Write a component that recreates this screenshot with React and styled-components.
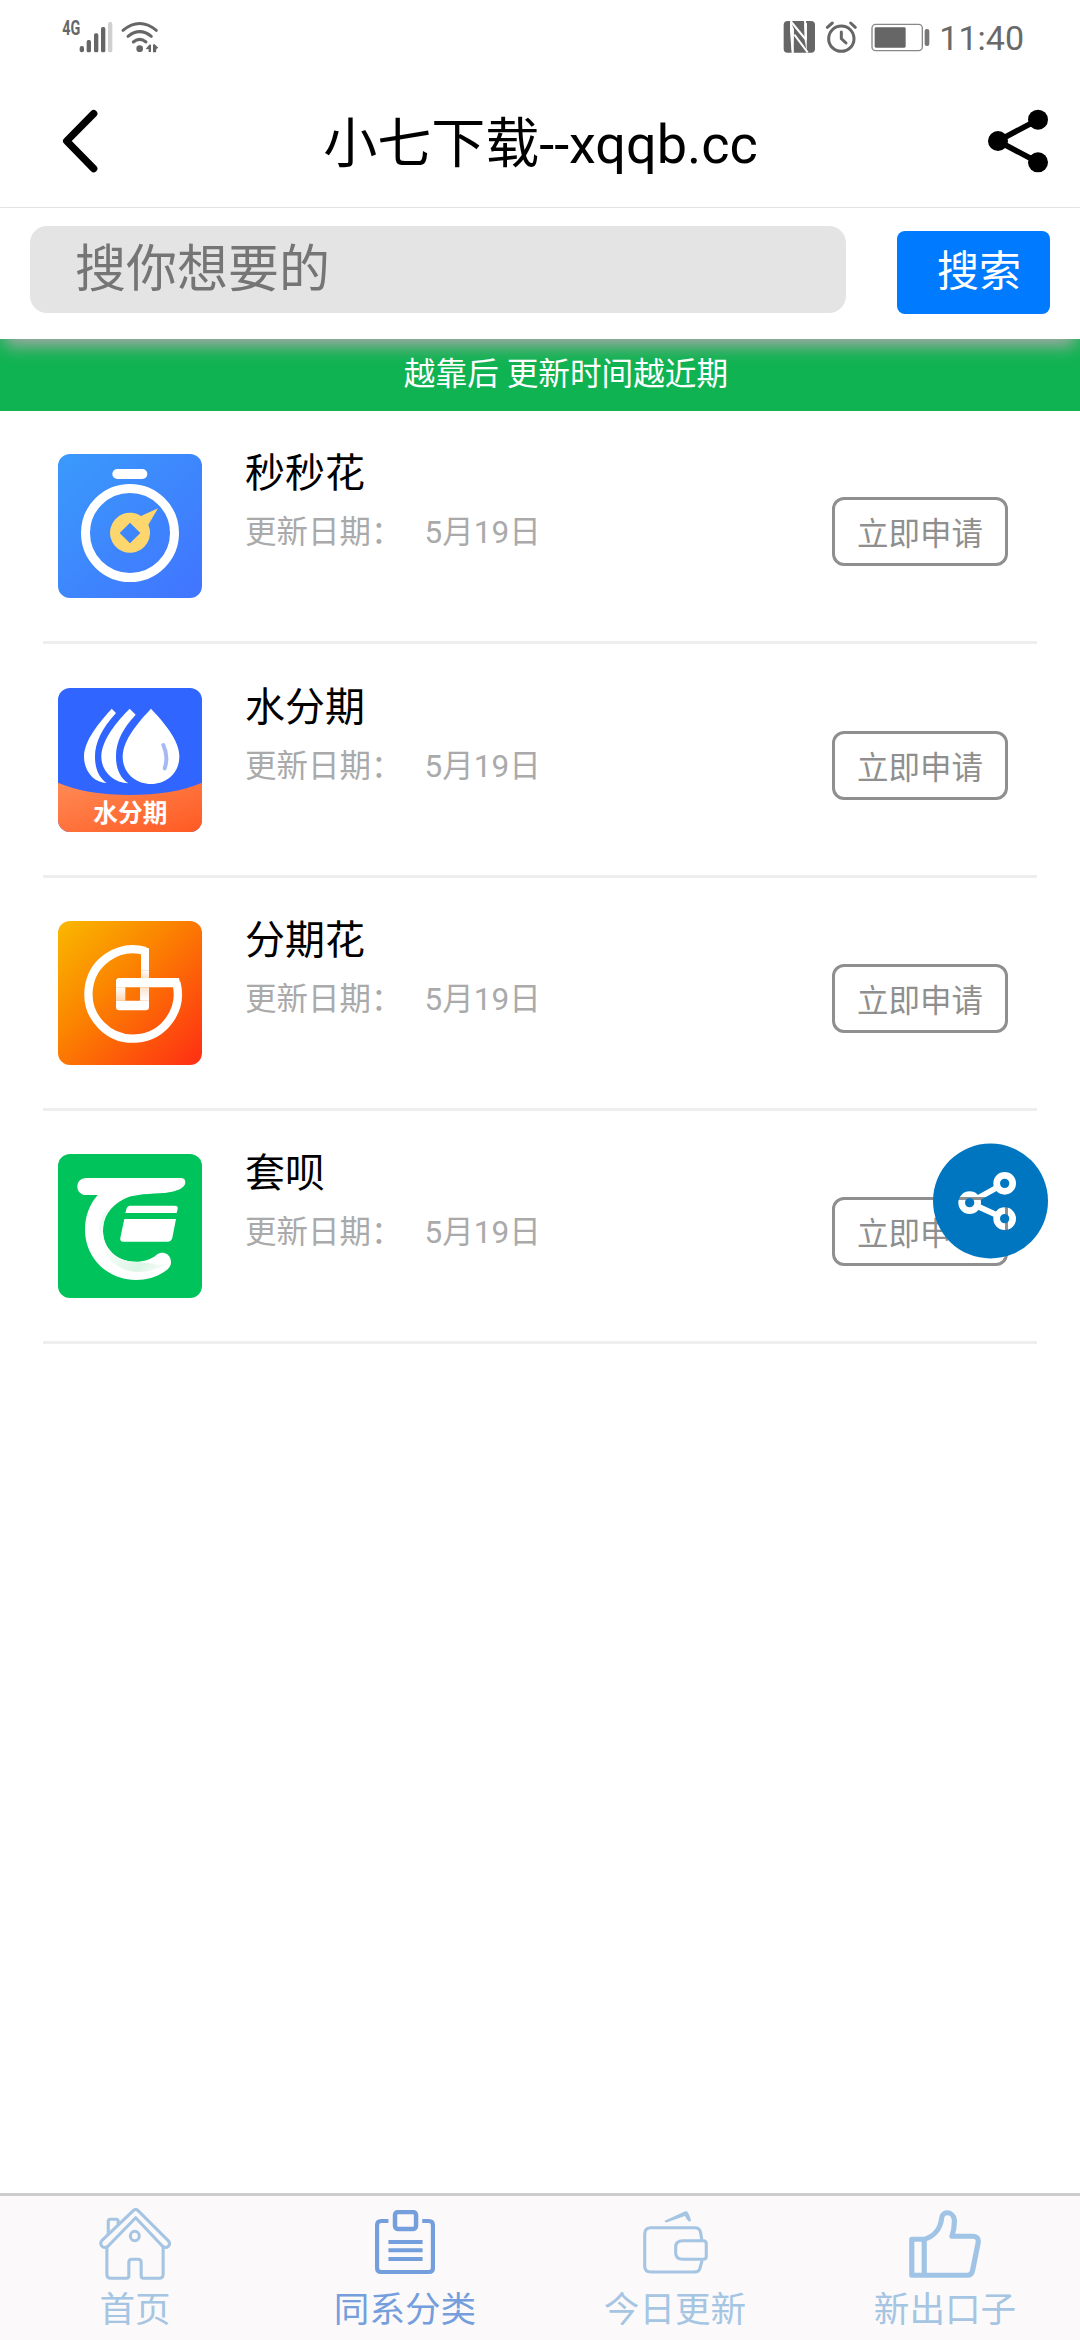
import React from "react";
import styled, { createGlobalStyle } from "styled-components";

const GlobalStyle = createGlobalStyle`
  * { box-sizing: border-box; }
  body {
    margin: 0;
    background: #fff;
    font-family: Roboto, "Noto Sans CJK SC", sans-serif;
  }
`;

const Screen = styled.div`
  position: relative;
  display: flex;
  flex-direction: column;
  width: 1080px;
  height: 2340px;
  background: #fff;
  overflow: hidden;
`;

const StatusBar = styled.header`
  display: flex;
  align-items: center;
  justify-content: space-between;
  height: 74px;
  padding: 0 56px 0 60px;
`;

const StatusGroup = styled.div`
  display: flex;
  align-items: center;
`;

const Clock = styled.span`
  margin-left: 7px;
  font-size: 34px;
  line-height: 40px;
  height: 38px;
  color: #696969;
`;

const TitleBar = styled.div`
  display: flex;
  align-items: center;
  justify-content: space-between;
  height: 134px;
  padding: 0 31px 0 61px;
  border-bottom: 1px solid #e4e4e4;
`;

const Title = styled.h1`
  margin: 9px 0 0 -5px;
  font-size: 54px;
  line-height: 64px;
  font-weight: 400;
  color: #000;
`;

const SearchBar = styled.form`
  position: relative;
  display: flex;
  align-items: flex-start;
  justify-content: space-between;
  height: 131px;
  padding: 18px 30px 0;
  background: #fff;
  box-shadow: 0 12px 16px -5px #a8a8a8;
`;

const SearchInput = styled.input`
  width: 816px;
  height: 87px;
  padding: 0 45px 1px;
  border: 0;
  border-radius: 17px;
  background: #e4e4e4;
  font: 400 51px Roboto, "Noto Sans CJK SC", sans-serif;
  &::placeholder { color: #757575; opacity: 1; }
`;

const SearchButton = styled.button`
  width: 153px;
  height: 83px;
  margin-top: 5px;
  padding: 0 0 11px 11px;
  border: 0;
  border-radius: 8px;
  background: #007aff;
  color: #fff;
  font: 400 42px Roboto, "Noto Sans CJK SC", sans-serif;
`;

const Banner = styled.div`
  display: flex;
  align-items: center;
  justify-content: center;
  height: 72px;
  padding: 0 0 8px 52px;
  background: #10b352;
  color: #fff;
  font-size: 31.65px;
`;

const List = styled.main`
  flex: 1;
  padding: 0 43px;
`;

const Row = styled.article`
  display: flex;
  height: 233.33px;
  padding: 43.4px 29px 0 15px;
  border-bottom: 3px solid #eee;
`;

const Info = styled.div`
  flex: 1;
  margin-left: 43px;
`;

const Name = styled.h2`
  margin: -4px 0 0;
  font-size: 40px;
  line-height: 48px;
  font-weight: 400;
  color: #000;
`;

const Meta = styled.div`
  display: flex;
  gap: 22px;
  margin-top: 15px;
  font-size: 31.5px;
  line-height: 40px;
  color: #aaa;
`;

const Apply = styled.button`
  width: 176px;
  height: 69px;
  margin-top: 43px;
  padding: 0 0 1px;
  border: 3px solid #8f8f8f;
  border-radius: 12px;
  background: #fff;
  color: #8f8f8f;
  font: 400 31.5px Roboto, "Noto Sans CJK SC", sans-serif;
`;

const AppIcon = styled.svg`
  flex: none;
  width: 144px;
  height: 144px;
  border-radius: 12px;
`;

const FloatingShare = styled.svg`
  position: absolute;
  left: 933px;
  top: 1143px;
  width: 115px;
  height: 116px;
`;

const TabBar = styled.nav`
  display: grid;
  grid-template-columns: repeat(4, 1fr);
  height: 147px;
  border-top: 3px solid #ccc;
  background: #fbf9fa;
`;

const Tab = styled.div`
  display: flex;
  flex-direction: column;
  align-items: center;
  color: ${(p) => (p.$active ? "#759edc" : "#a5c5e3")};
  font-size: 35.6px;
  line-height: 46px;
`;

const TabIcon = styled.div`
  display: flex;
  align-items: flex-start;
  justify-content: center;
  height: 91px;
  padding-top: ${(p) => p.$top}px;
`;

const SignalSvg = styled.svg`
  width: 100px;
  height: 44px;
  margin-top: -10px;
`;

const LeftStatus = () => (
  <SignalSvg viewBox="180 30 300 132" fill="#666">
    <text x="187" y="106" fontFamily="Roboto" fontWeight="700" fontSize="58" textLength="54" lengthAdjust="spacingAndGlyphs">4G</text>
    <rect x="239" y="138" width="13" height="19" rx="6" />
    <rect x="260" y="120" width="13" height="37" rx="5" />
    <rect x="282" y="100" width="13" height="57" rx="5" />
    <rect x="303" y="81" width="13" height="76" rx="5" />
    <rect x="324" y="66" width="13" height="91" rx="5" fill="#d0d0d0" />
    <g fill="none" stroke="#666" strokeWidth="9" strokeLinecap="round">
      <path d="M369 91Q419 50 469 91" />
      <path d="M384 109Q419 81 454 109" />
      <path d="M400 126Q419 110 438 126" />
    </g>
    <circle cx="419" cy="146" r="10" />
    <path d="M437 147L449 133L453 135V156H446V148ZM459 134L463 132L475 143L469 147L468 157H459Z" />
  </SignalSvg>
);

const RightStatus = () => (
  <svg width="150" height="34" viewBox="185 60 450 102">
    <path fill="#666" d="M202 63H272Q284 63 284 75V146Q284 158 272 158H202Q190 158 190 146V75Q190 63 202 63Z" />
    <path fill="none" stroke="#fff" strokeWidth="6" d="M212 62V94L217 159M213 66L255 117M222 104L262 157M254 62L257 120" />
    <path fill="#fff" d="M212 66L221 88L220 158L214 150ZM252 72L260 68L259 154L253 120Z" />
    <g fill="none" stroke="#666" strokeWidth="9" strokeLinecap="round">
      <circle cx="363" cy="116" r="38" />
      <path d="M363 96V116L377 129" />
      <path d="M321 82L336 69M391 69L405 82" />
    </g>
    <rect x="455" y="73" width="151" height="79" rx="11" fill="none" stroke="#888" strokeWidth="4" />
    <rect x="463" y="82" width="93" height="61" rx="4" fill="#666" />
    <rect x="613" y="87" width="14" height="51" rx="6" fill="#777" />
  </svg>
);

const BackIcon = () => (
  <svg width="38" height="64" viewBox="183 326 114 192">
    <path d="M281 340L200 422L281 505" fill="none" stroke="#000" strokeWidth="22" strokeLinecap="round" strokeLinejoin="round" />
  </svg>
);

const ShareIcon = () => (
  <svg width="62" height="64" viewBox="798 327 186 192">
    <path d="M951 359L831 423L951 487" fill="none" stroke="#000" strokeWidth="17" />
    <circle cx="951" cy="359" r="30" />
    <circle cx="831" cy="423" r="30" />
    <circle cx="951" cy="487" r="30" />
  </svg>
);

const StopwatchApp = () => (
  <AppIcon viewBox="84 72 432 432">
    <defs>
      <linearGradient id="blue" x1="0" y1="0" x2="1" y2="1">
        <stop offset="0" stopColor="#3a9afb" />
        <stop offset="1" stopColor="#4174ff" />
      </linearGradient>
    </defs>
    <path fill="url(#blue)" d="M84 72H516V504H84Z" />
    <rect x="247" y="117" width="105" height="30" rx="15" fill="#fff" />
    <circle cx="300" cy="309" r="133.500" fill="none" stroke="#fff" strokeWidth="27" />
    <path fill="#fdd76d" fillRule="evenodd" d="M333 258L384 235L355 284A60 60 0 1 1 333 258ZM300 278L269 309L300 340L331 309Z" />
  </AppIcon>
);

const WaterApp = () => (
  <AppIcon viewBox="84 54 432 432">
    <defs>
      <linearGradient id="coral" x1="0" y1="0" x2="1" y2="1">
        <stop offset="0" stopColor="#ff8a55" />
        <stop offset="1" stopColor="#ff5a22" />
      </linearGradient>
    </defs>
    <path fill="#3066ff" d="M84 54H516V486H84Z" />
    <path fill="url(#coral)" d="M84 338C190 387 410 387 516 338V486H84Z" />
    <g fill="#fff">
      <path d="M245 116L258 129C215 176 194 220 195 264C196 298 207 323 230 339C192 338 162 304 162 260C162 210 211 154 245 116Z" />
      <path d="M299 116L317 134C277 177 257 216 258 263C259 298 270 323 295 340C250 338 214 304 214 261C214 208 265 150 299 116Z" />
      <path d="M363 116C398 153 448 209 448 260C448 308 410 342 363 342C316 342 278 308 278 260C278 209 328 153 363 116Z" />
    </g>
    <path d="M400 225Q416 260 404 295" fill="none" stroke="#a6b9f5" strokeWidth="12" strokeLinecap="round" />
    <text x="301" y="457" textAnchor="middle" fontFamily="Noto Sans CJK SC" fontWeight="700" fontSize="74" fill="#fff">水分期</text>
  </AppIcon>
);

const InstallmentApp = () => (
  <AppIcon viewBox="84 63 432 432">
    <defs>
      <linearGradient id="orange" x1="0" y1="0" x2="1" y2="1">
        <stop offset="0" stopColor="#fab800" />
        <stop offset=".4" stopColor="#fb8500" />
        <stop offset="1" stopColor="#ff2d14" />
      </linearGradient>
      <linearGradient id="fadeDown" x1="0" y1="212" x2="0" y2="236" gradientUnits="userSpaceOnUse">
        <stop offset="0" stopColor="#fff" />
        <stop offset="1" stopColor="#fff" stopOpacity=".75" />
      </linearGradient>
      <linearGradient id="fadeLeft" x1="0" y1="262" x2="0" y2="302" gradientUnits="userSpaceOnUse">
        <stop offset="0" stopColor="#fff" />
        <stop offset="1" stopColor="#fff" stopOpacity=".7" />
      </linearGradient>
      <linearGradient id="fadeRight" x1="0" y1="262" x2="0" y2="302" gradientUnits="userSpaceOnUse">
        <stop offset="0" stopColor="#fff" stopOpacity=".8" />
        <stop offset="1" stopColor="#fff" />
      </linearGradient>
    </defs>
    <path fill="url(#orange)" d="M84 63H516V495H84Z" />
    <path d="M346 153A134 134 0 1 0 439 248" fill="none" stroke="#fff" strokeWidth="25" />
    <path fill="#fff" d="M333 140L357 145V212H333ZM258 244Q258 234 268 234H447L453 262H258ZM258 302H357V321Q357 331 347 331H268Q258 331 258 321Z" />
    <path fill="url(#fadeDown)" d="M333 212H357V234H333Z" />
    <path fill="url(#fadeLeft)" d="M258 262H286V302H258Z" />
    <path fill="url(#fadeRight)" d="M330 262H357V302H330Z" />
  </AppIcon>
);

const LoanApp = () => (
  <AppIcon viewBox="84 72 432 432">
    <defs>
      <linearGradient id="shade" x1="0" y1="0" x2="1" y2="1">
        <stop offset="0" stopColor="#dff7e8" />
        <stop offset=".3" stopColor="#fff" />
        <stop offset=".75" stopColor="#dcf5e6" />
        <stop offset="1" stopColor="#fff" />
      </linearGradient>
    </defs>
    <path fill="#00c45b" d="M84 72H516V504H84Z" />
    <path fill="#fff" d="M169 144H452Q466 144 466 157C465 180 425 188 390 190C340 193 305 194 278 209C239 230 219 262 219 303C219 354 260 395 314 395C344 395 363 388 380 374C402 359 424 375 423 398C422 413 410 420 402 426C378 442 350 450 318 450C233 450 165 383 165 299C165 260 178 223 203 195H169C152 195 142 183 142 170C142 156 152 144 169 144Z" />
    <path fill="url(#shade)" d="M240 232C214 256 206 280 208 310C213 376 262 426 325 426C363 426 397 413 415 397C395 408 380 405 360 400C342 396 330 396 314 395C260 395 219 354 219 303C219 275 226 252 240 232Z" />
    <path fill="#fff" d="M300 227H434Q445 227 443 237L440 249H286L290 235Q292 227 300 227ZM283 267H438L427 323Q424 335 412 335H280Q269 335 271 323Z" />
  </AppIcon>
);

const FloatingShareButton = () => (
  <FloatingShare viewBox="399 69 345 348">
    <defs>
      <mask id="cutout" maskUnits="userSpaceOnUse" x="399" y="69" width="345" height="348">
        <circle cx="571.5" cy="243" r="172.5" fill="#fff" />
        <path d="M614 190L509 248L614 296" fill="none" stroke="#000" strokeWidth="17" />
        <circle cx="614" cy="190" r="24" fill="#fff" stroke="#000" strokeWidth="20" />
        <circle cx="509" cy="248" r="24" fill="#fff" stroke="#000" strokeWidth="20" />
        <circle cx="614" cy="296" r="24" fill="#fff" stroke="#000" strokeWidth="20" />
      </mask>
    </defs>
    <path fill="#0076c1" mask="url(#cutout)" d="M399 69H744V417H399Z" />
  </FloatingShare>
);

const HomeIcon = () => (
  <svg width="72" height="72" viewBox="287 84 210 216" preserveAspectRatio="none" fill="none" stroke="#a5c5e3" strokeWidth="9" strokeLinejoin="round">
    <path d="M314 162V124Q314 118 320 118H337Q343 118 343 124V132" />
    <path d="M292 190Q292 185 296 181L387 92Q394 85 401 92L488 181Q497 191 489 199Q481 207 471 197L394 113L316 196Q306 206 297 200Q292 196 292 190Z" />
    <path d="M310 200V283Q310 295 322 295H367Q374 295 374 288V247Q374 238 383 238H401Q410 238 410 247V288Q410 295 417 295H462Q474 295 474 283V200" />
    <ellipse cx="391.500" cy="168" rx="13" ry="14" />
  </svg>
);

const ClipboardIcon = () => (
  <svg width="60" height="64" viewBox="1089 90 174 192" preserveAspectRatio="none" fill="none" stroke="#759edc" strokeWidth="12">
    <path d="M1128 123H1107Q1095 123 1095 135V264Q1095 276 1107 276H1245Q1257 276 1257 264V135Q1257 123 1245 123H1226" />
    <rect x="1147" y="96" width="61" height="51" rx="9" strokeWidth="13" />
    <path d="M1128 186H1227M1128 211H1227M1128 237H1227" />
  </svg>
);

const WalletIcon = () => (
  <svg width="65" height="63" viewBox="299 92 189 189" preserveAspectRatio="none" fill="none" stroke="#a5c5e3" strokeWidth="9" strokeLinejoin="round">
    <path d="M470 178L466 155Q464 142 449 142H322Q304 142 304 160V258Q304 275 322 275H448Q463 275 465 262L471 240" />
    <path d="M415 181H474Q483 181 483 190V228Q483 237 474 237H415Q394 237 394 218V200Q394 181 415 181Z" />
    <path fill="#a5c5e3" stroke="none" d="M362 121L417 95Q426 90 430 97Q436 107 439 121L433 124Q426 119 421 107L369 126Q361 127 362 121Z" />
  </svg>
);

const ThumbIcon = () => (
  <svg width="72" height="68" viewBox="1073 90 208 204" preserveAspectRatio="none" fill="none" stroke="#a0c4e6" strokeWidth="15" strokeLinejoin="round">
    <path d="M1081 178H1117C1143 170 1163 149 1167 117C1167 91 1201 93 1204 119Q1205 145 1197 169H1256Q1275 169 1273 187L1257 270Q1254 286 1242 286H1081Z" />
    <path d="M1117 178V286" />
  </svg>
);

const APPS = [
  { name: "秒秒花", date: "5月19日", Icon: StopwatchApp },
  { name: "水分期", date: "5月19日", Icon: WaterApp },
  { name: "分期花", date: "5月19日", Icon: InstallmentApp },
  { name: "套呗", date: "5月19日", Icon: LoanApp },
];

const TABS = [
  { label: "首页", Icon: HomeIcon, top: 12 },
  { label: "同系分类", Icon: ClipboardIcon, top: 14, active: true },
  { label: "今日更新", Icon: WalletIcon, top: 15 },
  { label: "新出口子", Icon: ThumbIcon, top: 14 },
];

export default function App() {
  return (
    <>
      <GlobalStyle />
      <Screen>
        <StatusBar>
          <StatusGroup><LeftStatus /></StatusGroup>
          <StatusGroup><RightStatus /><Clock>11:40</Clock></StatusGroup>
        </StatusBar>
        <TitleBar>
          <BackIcon />
          <Title>小七下载--xqqb.cc</Title>
          <ShareIcon />
        </TitleBar>
        <SearchBar onSubmit={(e) => e.preventDefault()}>
          <SearchInput placeholder="搜你想要的" />
          <SearchButton type="submit">搜索</SearchButton>
        </SearchBar>
        <Banner>越靠后 更新时间越近期</Banner>
        <List>
          {APPS.map(({ name, date, Icon }) => (
            <Row key={name}>
              <Icon />
              <Info>
                <Name>{name}</Name>
                <Meta><span>更新日期：</span><span>{date}</span></Meta>
              </Info>
              <Apply>立即申请</Apply>
            </Row>
          ))}
        </List>
        <TabBar>
          {TABS.map(({ label, Icon, top, active }) => (
            <Tab key={label} $active={active}>
              <TabIcon $top={top}><Icon /></TabIcon>
              {label}
            </Tab>
          ))}
        </TabBar>
        <FloatingShareButton />
      </Screen>
    </>
  );
}
